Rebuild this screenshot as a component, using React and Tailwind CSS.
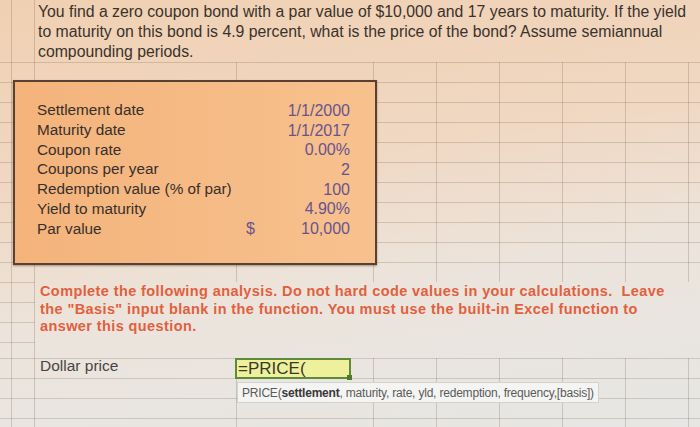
import React from 'react';

// spreadsheet grid lines, drawn as backgrounds
const gridFull =
  '[background-image:linear-gradient(to_right,transparent_11px,rgba(110,90,70,0.25)_11px_12px,transparent_12px_34px,rgba(110,90,70,0.25)_34px_35px,transparent_35px_236px,rgba(110,90,70,0.25)_236px_237px,transparent_237px_373px,rgba(110,90,70,0.25)_373px_374px,transparent_374px_436px,rgba(110,90,70,0.25)_436px_437px,transparent_437px_499px,rgba(110,90,70,0.25)_499px_500px,transparent_500px_562px,rgba(110,90,70,0.25)_562px_563px,transparent_563px_625px,rgba(110,90,70,0.25)_625px_626px,transparent_626px_688px,rgba(110,90,70,0.25)_688px_689px,transparent_689px),repeating-linear-gradient(to_bottom,rgba(110,90,70,0.23)_0_1px,transparent_1px_20px)]';

const gridLeft =
  '[background-image:linear-gradient(to_right,transparent_11px,rgba(110,90,70,0.25)_11px_12px,transparent_12px_34px,rgba(110,90,70,0.25)_34px_35px),repeating-linear-gradient(to_bottom,rgba(110,90,70,0.23)_0_1px,transparent_1px_20px)]';

const gridLeftCols =
  '[background-image:linear-gradient(to_right,transparent_11px,rgba(110,90,70,0.25)_11px_12px,transparent_12px_34px,rgba(110,90,70,0.25)_34px_35px)]';

const inputs = [
  { label: 'Settlement date', value: '1/1/2000' },
  { label: 'Maturity date', value: '1/1/2017' },
  { label: 'Coupon rate', value: '0.00%' },
  { label: 'Coupons per year', value: '2' },
  { label: 'Redemption value (% of par)', value: '100' },
  { label: 'Yield to maturity', value: '4.90%' },
  { label: 'Par value', value: '10,000', dollar: true },
];

export default function App() {
  return (
    <div className="w-[700px] h-[427px] overflow-hidden flex flex-col font-['Liberation_Sans',Arial,sans-serif] [background-image:linear-gradient(172deg,#f0d0b2_0%,#f0d8c3_38%,#ece4dc_64%,#e6e6e4_100%)]">
      {/* Question */}
      <div className="h-[62px] flex shrink-0">
        <div className={`w-[35px] shrink-0 ${gridLeftCols}`} />
        <p className="pl-[3px] pt-[2px] text-[15.8px] leading-[20px] text-[#3a322c]">
          You find a zero coupon bond with a par value of $10,000 and 17 years to maturity. If the yield
          <br />
          to maturity on this bond is 4.9 percent, what is the price of the bond? Assume semiannual
          <br />
          compounding periods.
        </p>
      </div>

      {/* Inputs */}
      <div className={`h-[220px] shrink-0 ${gridFull}`}>
        <div className="ml-[13px] mt-[18px] w-[364px] h-[185px] border-2 border-[#5a4030] shadow-[0_1px_2px_rgba(0,0,0,0.35)] bg-[linear-gradient(to_right,#f4b37b,#f7c18e)] pl-[22px] pr-[25px] pt-[19px]">
          {inputs.map((row) => (
            <div key={row.label} className="flex items-center h-[19.7px]">
              <span className="flex-1 text-[15.3px] text-[#36302c]">{row.label}</span>
              <div className="w-[104px] flex justify-between text-[16px] text-[#67548f]">
                <span>{row.dollar ? '$' : ''}</span>
                <span>{row.value}</span>
              </div>
            </div>
          ))}
        </div>
      </div>

      {/* Instructions */}
      <div className="h-[76px] flex shrink-0">
        <div className={`w-[35px] shrink-0 ${gridLeft}`} />
        <p className="pl-[5px] pt-[1px] text-[14.5px] leading-[17.5px] font-bold tracking-[0.4px] text-[#e2603d]">
          Complete the following analysis. Do not hard code values in your calculations.&nbsp; Leave
          <br />
          the "Basis" input blank in the function. You must use the built-in Excel function to
          <br />
          answer this question.
        </p>
      </div>

      {/* Answer */}
      <div className={`flex-1 ${gridFull}`}>
        <div className="flex items-center h-[21px]">
          <span className="w-[235px] pl-[40px] -mt-[6px] text-[15.5px] text-[#474543]">Dollar price</span>
          <div className="relative w-[116px] h-[21px] border-2 border-[#5f8a3a] bg-[#eef09c] flex items-center pl-[1px] text-[17px] leading-none text-[#3a3a2a]">
            =PRICE(
            <span className="absolute -right-[3px] -bottom-[3px] w-[5px] h-[5px] bg-[#4f7a2e]" />
          </div>
        </div>
        <div className="ml-[237px] mt-[3px] w-[362px] h-[21px] border border-[#d2d2d0] bg-[#f4f4f2] flex items-center pl-[4px] text-[12px] text-[#5a5a5a] tracking-[-0.2px]">
          PRICE(<span className="font-bold text-[#383838]">settlement</span>, maturity, rate, yld, redemption, frequency,[basis])
        </div>
      </div>
    </div>
  );
}
